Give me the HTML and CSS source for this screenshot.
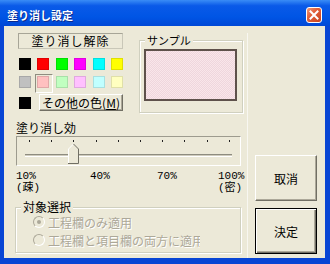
FILE: index.html
```html
<!DOCTYPE html>
<html lang="ja">
<head>
  <meta charset="UTF-8">
  <meta name="viewport" content="width=device-width, initial-scale=1.0">
  <title>塗り消し設定</title>
  <link rel="stylesheet" href="styles.css">
</head>
<body>

  <div class="window">
    <div class="titlebar">
      <span class="title">塗り消し設定</span>
      <span class="close">
        <svg width="14" height="14" viewBox="0 0 14 14">
          <path d="M3.5 3.5 L10.5 10.5 M10.5 3.5 L3.5 10.5" stroke="#fff" stroke-width="2" stroke-linecap="square"/>
        </svg>
      </span>
    </div>

    <div class="client">
      <div class="main">
        <div class="top">
          <div class="palette">
            <button class="clear-btn">塗り消し解除</button>

            <div class="swatches">
              <span class="swatch" style="background:#000000"></span>
              <span class="swatch" style="background:#ff0000"></span>
              <span class="swatch" style="background:#00ff00"></span>
              <span class="swatch" style="background:#ff00ff"></span>
              <span class="swatch" style="background:#00ffff"></span>
              <span class="swatch" style="background:#ffff00"></span>
              <span class="swatch" style="background:#c0c0c0"></span>
              <span class="swatch selected" style="background:#ffc0c0"></span>
              <span class="swatch" style="background:#c0ffc0"></span>
              <span class="swatch" style="background:#ffc0ff"></span>
              <span class="swatch" style="background:#c0ffff"></span>
              <span class="swatch" style="background:#ffffc0"></span>
            </div>

            <div class="more-row">
              <span class="swatch" style="background:#000000"></span>
              <button class="more-btn">その他の色(<u>M</u>)</button>
            </div>
          </div>

          <fieldset class="sample">
            <legend>サンプル</legend>
            <div class="sample-box"></div>
          </fieldset>
        </div>

        <div class="slider-label">塗り消し効</div>
        <div class="slider">
          <svg width="223" height="28" viewBox="0 0 223 28">
            <g fill="#222">
              <rect x="12" y="3" width="1" height="2"/>
              <rect x="34" y="3" width="1" height="2"/>
              <rect x="56" y="3" width="1" height="2"/>
              <rect x="79" y="3" width="1" height="2"/>
              <rect x="101" y="3" width="1" height="2"/>
              <rect x="123" y="3" width="1" height="2"/>
              <rect x="145" y="3" width="1" height="2"/>
              <rect x="167" y="3" width="1" height="2"/>
              <rect x="190" y="3" width="1" height="2"/>
              <rect x="212" y="3" width="1" height="2"/>
            </g>
            <rect x="8" y="17" width="207" height="1" fill="#8e8c80"/>
            <rect x="8" y="18" width="207" height="1" fill="#cfccbd"/>
            <rect x="8" y="19" width="207" height="1" fill="#ffffff"/>
            <path d="M51.5 26.5 V12 L56.5 7 L61.5 12 V26.5 Z" fill="#ece9d8"/>
            <path d="M51.5 26 V12 L56.5 7" fill="none" stroke="#ffffff"/>
            <path d="M56.5 7 L61.5 12 V26.5 H51" fill="none" stroke="#716f64"/>
          </svg>
        </div>
        <div class="scale">
          <span class="mark w10">10%<br>(疎)</span>
          <span class="mark w40">40%</span>
          <span class="mark w70">70%</span>
          <span class="mark">100%<br>(密)</span>
        </div>

        <fieldset class="target">
          <legend>対象選択</legend>
          <label class="option"><span class="radio checked"></span><span class="option-text">工程欄のみ適用</span></label>
          <label class="option"><span class="radio"></span><span class="option-text">工程欄と項目欄の両方に適用</span></label>
        </fieldset>
      </div>

      <div class="side">
        <button class="btn">取消</button>
        <button class="btn default">決定</button>
      </div>
    </div>
  </div>

</body>
</html>
```

FILE: styles.css
```css
:root {
  --face: #ece9d8;
  --shadow: #716f64;
  --mid: #aca899;
  --frame: #d0d0bf;
}

body {
  margin: 0;
  font-family: "Noto Sans CJK JP", "Noto Sans", sans-serif;
  color: #000;
}

.window {
  width: 330px;
  height: 264px;
  background: #0845d4;
  display: flex;
  flex-direction: column;
}

.titlebar {
  height: 26px;
  flex: none;
  box-sizing: border-box;
  padding: 4px 8px 0 7px;
  display: flex;
  align-items: center;
  background: linear-gradient(#3a8cf6, #0a5ae8 22%, #0055e5 65%, #0048d6);
}

.title {
  flex: 1;
  color: #fff;
  font-size: 11px;
  font-weight: bold;
  text-shadow: 1px 1px 0 #0c2a8c;
}

.close {
  width: 14px;
  height: 14px;
  border: 1px solid #fff;
  border-radius: 3px;
  background: linear-gradient(135deg, #f29a78, #e2603a 40%, #c8421d);
  display: flex;
}

.client {
  flex: 1;
  margin: 0 5px 6px 4px;
  background: var(--face);
  display: flex;
}

.main {
  width: 244px;
  box-sizing: border-box;
  margin-top: 7px;
  padding-left: 12px;
  border-right: 1px solid #f8f7f1;
}

.top {
  display: flex;
  align-items: flex-start;
}

.palette {
  width: 105px;
  margin-left: 2px;
}

.clear-btn {
  display: block;
  width: 105px;
  height: 16px;
  padding: 0;
  border: 1px solid #a7a597;
  border-bottom-color: #c9c7b8;
  border-right-color: #c9c7b8;
  background: var(--face);
  font-family: inherit;
  font-size: 12px;
  line-height: 14px;
  letter-spacing: 1px;
}

.swatches {
  display: grid;
  grid-template-columns: repeat(6, 12px);
  column-gap: 6.4px;
  row-gap: 6px;
  margin: 9px 0 0 1px;
}

.swatch {
  width: 12px;
  height: 12px;
  box-sizing: border-box;
  border: 1px solid rgba(0, 0, 0, 0.12);
}

.selected {
  position: relative;
}

.selected::before {
  content: "";
  position: absolute;
  left: -3px;
  top: -3px;
  width: 16px;
  height: 17px;
  border-top: 1px solid #8f8d80;
  border-left: 1px solid #8f8d80;
  border-right: 1px solid #fff;
  border-bottom: 1px solid #fff;
}

.more-row {
  display: flex;
  align-items: center;
  margin: 6px 0 0 1px;
}

.more-btn {
  margin-left: 8px;
  width: 84px;
  height: 17px;
  padding: 0;
  background: var(--face);
  border: 1px solid;
  border-color: #fff var(--shadow) var(--shadow) #fff;
  box-shadow: inset -1px -1px 0 var(--mid);
  font-family: inherit;
  font-size: 12px;
  line-height: 14px;
}

fieldset {
  margin: 0;
  min-width: 0;
  box-sizing: border-box;
  border: 1px solid var(--frame);
  box-shadow: 1px 1px 0 #fff, inset 1px 1px 0 #fff;
}

legend {
  padding: 0 2px;
  background: var(--face);
}

.sample {
  width: 104px;
  height: 80px;
  margin-left: 16px;
  padding: 0 0 0 4px;
}

.sample legend {
  margin-left: 1px;
  font-size: 11px;
  line-height: 14px;
}

.sample-box {
  width: 93px;
  height: 52px;
  margin-top: 2px;
  box-sizing: border-box;
  border: 2px solid #5e514b;
  background: repeating-conic-gradient(#f9e6ea 0 25%, #efd6dd 0 50%) 0 0 / 2px 2px;
}

.slider-label {
  margin-top: 8px;
  font-size: 12px;
  line-height: 14px;
}

.slider {
  width: 225px;
  height: 30px;
  margin-top: 1px;
  box-sizing: border-box;
  border-top: 1px solid #9d9b8e;
  border-left: 1px solid #9d9b8e;
  border-right: 1px solid #fff;
  border-bottom: 1px solid #fff;
}

.slider svg {
  display: block;
}

.scale {
  display: flex;
  margin-top: 4px;
  font-family: "Liberation Mono", "Noto Sans CJK JP", monospace;
  font-size: 11px;
  line-height: 12px;
}

.w10 { width: 74px; }
.w40 { width: 67px; }
.w70 { width: 61px; }

.target {
  width: 226px;
  height: 52px;
  margin: 7px 0 0 -1px;
  padding: 0 0 0 17px;
}

.target legend {
  margin-left: -12px;
  font-size: 12px;
  line-height: 12px;
}

.option {
  display: flex;
  align-items: center;
  height: 18px;
  color: var(--mid);
  font-size: 12px;
}

.radio {
  width: 12px;
  height: 12px;
  box-sizing: border-box;
  border-radius: 50%;
  border: 1px solid;
  border-color: var(--mid) #fff #fff var(--mid);
  display: flex;
  align-items: center;
  justify-content: center;
  margin-right: 3px;
}

.radio.checked::after {
  content: "";
  width: 4px;
  height: 4px;
  border-radius: 50%;
  background: var(--mid);
}

.option-text {
  max-width: 152px;
  overflow: hidden;
  white-space: nowrap;
  text-shadow: 1px 1px 0 #fff;
}

.side {
  flex: 1;
  display: flex;
  flex-direction: column;
  justify-content: flex-end;
  gap: 7px;
  padding: 0 0 4px 7px;
}

.btn {
  width: 62px;
  height: 46px;
  padding: 0;
  background: var(--face);
  border: 1px solid;
  border-color: #fff var(--shadow) var(--shadow) #fff;
  box-shadow: inset -1px -1px 0 var(--mid);
  font-family: inherit;
  font-size: 12px;
}

.btn.default {
  border: 1px solid #000;
  box-shadow: inset 1px 1px 0 #fff, inset -1px -1px 0 var(--shadow), inset -2px -2px 0 var(--mid);
}
```
